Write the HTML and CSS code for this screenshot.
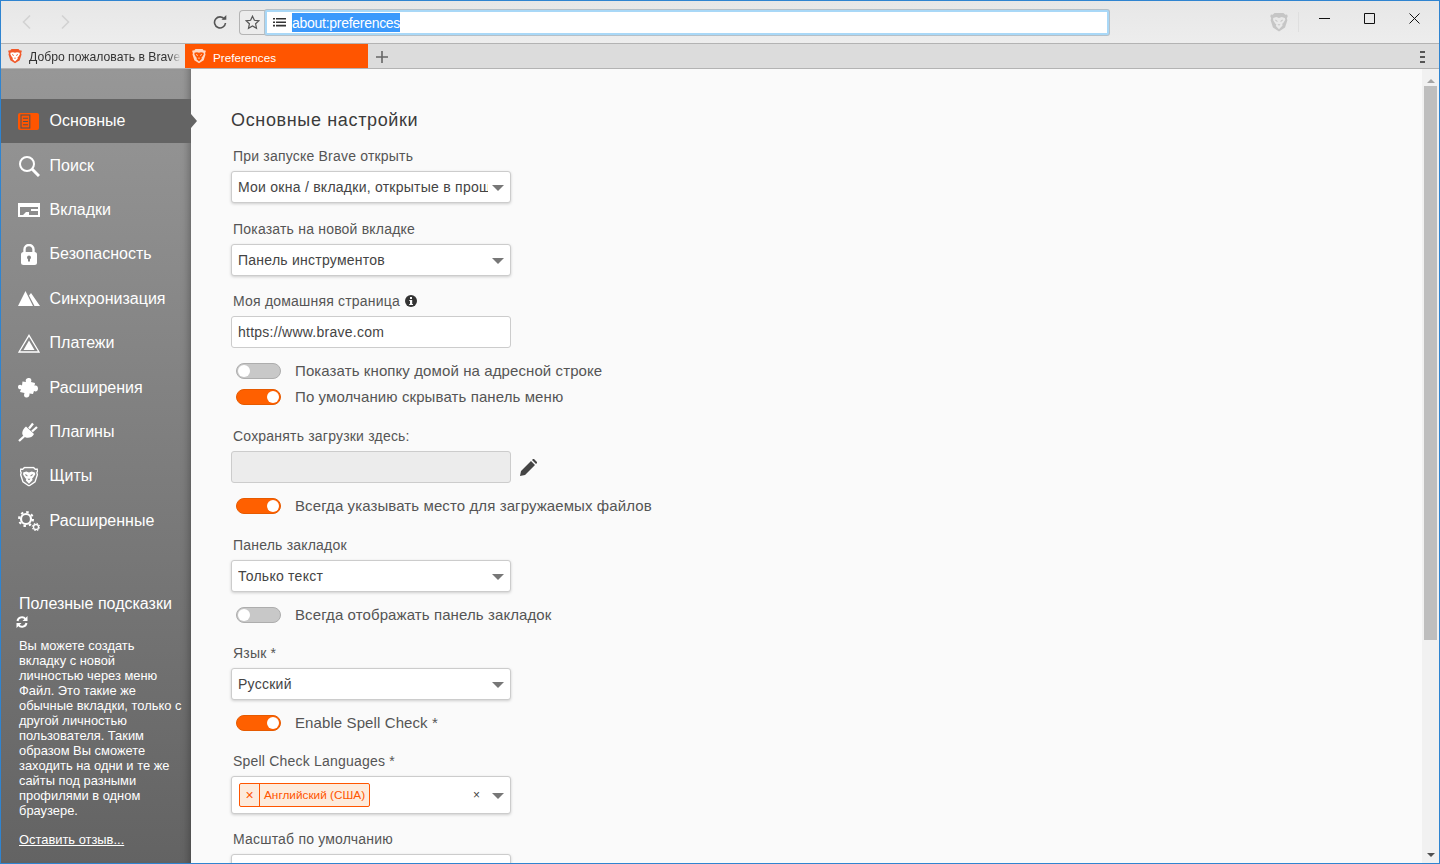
FILE: index.html
```html
<!DOCTYPE html>
<html lang="ru">
<head>
<meta charset="utf-8">
<title>Preferences</title>
<link rel="stylesheet" href="styles.css">
</head>
<body>
<svg class="defs" width="0" height="0" aria-hidden="true">
  <symbol id="shield" viewBox="0 0 20 22">
    <path d="M5 1h10l2 2 2-.3.7 1.800-1 2.300.6 2.200-2.600 8L10 21.500 3.300 17l-2.600-8 .6-2.200-1-2.300L1 2.700 3 3z"/>
  </symbol>
  <symbol id="lion" viewBox="0 0 20 22">
    <path fill-rule="evenodd" d="M3.500 6.500l3.500-1 3 1 3-1 3.500 1 .5 2-2.500 4-1 .5.5 2L10 19l-3.500-3.500.5-2-1-.5-2.500-4zM6.200 8.200l2.300 1.700-.5 1-2.300-1.700zM13.800 8.200l-2.300 1.700.5 1 2.300-1.700zM8.300 13.500h3.400L10 15.300z"/>
  </symbol>
</svg>
<div class="toolbar">
  <svg class="nav-arrow" width="12" height="16" viewBox="0 0 12 16"><path d="M9 1.500L2.500 8 9 14.500"/></svg>
  <svg class="nav-arrow forward" width="12" height="16" viewBox="0 0 12 16"><path d="M3 1.500L9.500 8 3 14.500"/></svg>
  <svg class="reload" width="14" height="14" viewBox="0 0 14 14"><path d="M11.500 4.200A5.500 5.500 0 1 0 12.500 8"/><path class="solid" d="M8.500 4.800h4.800V0z"/></svg>
  <div class="star-box">
    <svg width="15" height="15" viewBox="0 0 15 15"><path d="M7.500 1.200l1.900 4.100 4.500.5-3.300 3 .9 4.500-4-2.300-4 2.300.9-4.500-3.300-3 4.500-.5z"/></svg>
  </div>
  <div class="url-box">
    <svg class="url-icon" width="13" height="9" viewBox="0 0 13 9"><path d="M0 0h2v1.600H0zM3 0h10v1.600H3zM0 3.400h2V5H0zM3 3.400h10V5H3zM0 6.800h2v1.600H0zM3 6.800h10v1.600H3z"/></svg>
    <span class="url-text">about:preferences</span>
  </div>
  <svg class="lion-btn" width="18" height="20" viewBox="0 0 20 22"><use href="#shield"/><use class="lion-cut" href="#lion"/></svg>
  <div class="tool-sep"></div>
  <div class="win-btns">
    <svg width="11" height="11" viewBox="0 0 11 11"><path d="M0 5.500h11"/></svg>
    <svg width="11" height="11" viewBox="0 0 11 11"><path d="M.5.500h10v10H.5z"/></svg>
    <svg width="11" height="11" viewBox="0 0 11 11"><path d="M.5.500l10 10M10.500.500l-10 10"/></svg>
  </div>
</div>

<div class="tabbar">
  <div class="tab">
    <svg class="tab-icon" width="14" height="16" viewBox="0 0 20 22"><use class="shield-o" href="#shield"/><use class="lion-w" href="#lion"/></svg>
    <span class="tab-title fade">Добро пожаловать в Brave</span>
  </div>
  <div class="tab active">
    <svg class="tab-icon" width="14" height="16" viewBox="0 0 20 22"><use class="shield-w" href="#shield"/><use class="shield-lion" href="#lion"/></svg>
    <span class="tab-title">Preferences</span>
  </div>
  <svg class="plus" width="12" height="12" viewBox="0 0 12 12"><path d="M6 0v12M0 6h12"/></svg>
  <div class="tab-menu"><i></i><i></i><i></i></div>
</div>

<div class="main">
  <aside class="sidebar">
    <nav class="nav">
      <a class="nav-item current">
        <svg class="nav-icon" width="21" height="17" viewBox="0 0 21 17"><rect width="21" height="17" rx="2" fill="#ff5500"/><rect x="3" y="2" width="8.800" height="13" fill="none" stroke="#555" stroke-width="1.100"/><path d="M5 5.200h5M5 8.500h5M5 11.800h5" stroke="#555" stroke-width="1.100"/></svg>
        <span>Основные</span>
      </a>
      <a class="nav-item">
        <svg class="nav-icon" width="22" height="22" viewBox="0 0 22 22"><circle cx="9" cy="9" r="7" fill="none" stroke="#fff" stroke-width="2"/><path d="M14 14l7 7" stroke="#fff" stroke-width="3"/></svg>
        <span>Поиск</span>
      </a>
      <a class="nav-item">
        <svg class="nav-icon" width="22" height="14" viewBox="0 0 22 14"><path fill="#fff" d="M0 0h22v14H0z"/><path fill="#8c8c8c" d="M2 4h18v2H13v2h7v4H11V9H8l-3 3H2z"/></svg>
        <span>Вкладки</span>
      </a>
      <a class="nav-item">
        <svg class="nav-icon lock" width="16" height="21" viewBox="0 0 16 21"><path fill="none" stroke="#fff" stroke-width="2.400" d="M3.500 9V5.500a4.500 4.500 0 0 1 9 0V9"/><rect y="8" width="16" height="13" rx="2.500" fill="#fff"/><circle cx="8" cy="13.500" r="2" fill="#848484"/><path d="M7 14h2v3.500H7z" fill="#848484"/></svg>
        <span>Безопасность</span>
      </a>
      <a class="nav-item">
        <svg class="nav-icon" width="22" height="15" viewBox="0 0 22 15"><path fill="#fff" d="M7.500 0L15 15H0zM13 2l9 13h-5.500L11 4.500z"/></svg>
        <span>Синхронизация</span>
      </a>
      <a class="nav-item">
        <svg class="nav-icon" width="22" height="19" viewBox="0 0 22 19"><path fill="none" stroke="#fff" stroke-width="1.300" d="M11 1.300L21 18H1z"/><path fill="#fff" d="M11 6.500L16.500 16h-11z"/></svg>
        <span>Платежи</span>
      </a>
      <a class="nav-item">
        <svg class="nav-icon" width="20" height="20" viewBox="0 0 20 20"><path fill="#fff" d="M8 4C7 1 9 0 11 0c2 0 3 2 2 4l4 1-.5 3c1.500-1 3.500 0 3.500 2.500S18 14 16 13l-1 3-3.500-.5c.5 2.500-1.500 4.500-3.500 4S5.500 17.500 6.500 15L2 14l1-3c-2 1-3-.5-3-2 0-2 2-3 4-1.500l.5-4z"/></svg>
        <span>Расширения</span>
      </a>
      <a class="nav-item">
        <svg class="nav-icon" width="20" height="21" viewBox="0 0 20 21"><path fill="#fff" d="M8 5.500l8 7.500c-2 4-7 5-10 2.500S4 9 8 5.500z"/><path d="M11 7.500l4-5M14 10.500l5-4.500M6.500 15l-5.500 5" stroke="#fff" stroke-width="2.300" fill="none"/></svg>
        <span>Плагины</span>
      </a>
      <a class="nav-item">
        <svg class="nav-icon shield-nav" width="18" height="21" viewBox="0 0 20 22"><use class="shield-line" href="#shield"/><use class="lion-w" href="#lion"/></svg>
        <span>Щиты</span>
      </a>
      <a class="nav-item">
        <svg class="nav-icon" width="22" height="20" viewBox="0 0 22 20"><circle cx="8" cy="8" r="5" fill="none" stroke="#fff" stroke-width="2.200"/><circle cx="8" cy="8" r="7" fill="none" stroke="#fff" stroke-width="2" stroke-dasharray="2.500 3"/><circle cx="18" cy="16" r="2.500" fill="none" stroke="#fff" stroke-width="1.300"/><circle cx="18" cy="16" r="3.800" fill="none" stroke="#fff" stroke-width="1" stroke-dasharray="1.500 1.500"/></svg>
        <span>Расширенные</span>
      </a>
    </nav>
    <div class="tips">
      <h3 class="tips-title">Полезные подсказки</h3>
      <svg class="tips-refresh" width="12" height="12" viewBox="0 0 12 12"><path fill="none" stroke="#fff" stroke-width="2" d="M1.500 5A4.500 4.500 0 0 1 9.500 3M10.500 7A4.500 4.500 0 0 1 2.500 9"/><path fill="#fff" d="M11.500 0v5h-5zM.5 12V7h5z"/></svg>
      <p class="tips-text">Вы можете создать вкладку с новой личностью через меню Файл. Это такие же обычные вкладки, только с другой личностью пользователя. Таким образом Вы сможете заходить на одни и те же сайты под разными профилями в одном браузере.</p>
      <a class="tips-link">Оставить отзыв...</a>
    </div>
  </aside>

  <section class="content">
    <h2 class="page-title">Основные настройки</h2>

    <label class="field-label start">При запуске Brave открыть</label>
    <div class="select"><span class="value">Мои окна / вкладки, открытые в прошлый раз</span></div>

    <label class="field-label gap">Показать на новой вкладке</label>
    <div class="select"><span class="value">Панель инструментов</span></div>

    <label class="field-label gap-home">Моя домашняя страница
      <svg class="info" width="12" height="12" viewBox="0 0 12 12"><circle cx="6" cy="6" r="6" fill="#333"/><path fill="#fafafa" d="M5 2h2v2H5zM4.300 5h2.900v4h.8v1H4.200V9H5V6h-.7z"/></svg>
    </label>
    <div class="input"><span>https://www.brave.com</span></div>

    <div class="switch-row first"><span class="switch"></span><span class="switch-text">Показать кнопку домой на адресной строке</span></div>
    <div class="switch-row next"><span class="switch on"></span><span class="switch-text">По умолчанию скрывать панель меню</span></div>

    <label class="field-label gap-wide">Сохранять загрузки здесь:</label>
    <div class="path-row">
      <div class="input disabled"></div>
      <svg class="pencil" width="17" height="17" viewBox="0 0 17 17"><path fill="#444" d="M0 17l1-5L11 2l4 4L5 16zM12 1l1-1 1 0 3 3v1l-1 1z"/></svg>
    </div>
    <div class="switch-row first"><span class="switch on"></span><span class="switch-text">Всегда указывать место для загружаемых файлов</span></div>

    <label class="field-label gap-wide">Панель закладок</label>
    <div class="select"><span class="value">Только текст</span></div>
    <div class="switch-row first"><span class="switch"></span><span class="switch-text">Всегда отображать панель закладок</span></div>

    <label class="field-label gap-lang">Язык *</label>
    <div class="select"><span class="value">Русский</span></div>
    <div class="switch-row first"><span class="switch on"></span><span class="switch-text">Enable Spell Check *</span></div>

    <label class="field-label gap-lang">Spell Check Languages *</label>
    <div class="select multi">
      <span class="chip"><span class="chip-x">×</span><span class="chip-text">Английский (США)</span></span>
      <span class="clear">×</span>
    </div>

    <label class="field-label gap-zoom">Масштаб по умолчанию</label>
    <div class="select"></div>
  </section>

  <div class="scrollbar">
    <span class="scroll-up"></span>
    <span class="scroll-thumb"></span>
    <span class="scroll-down"></span>
  </div>
</div>
</body>
</html>
```
FILE: styles.css
```css
* { box-sizing: border-box; }
html, body { margin: 0; height: 100%; overflow: hidden; }
body {
  display: flex;
  flex-direction: column;
  height: 864px;
  border: 1px solid #2f84d0;
  font-family: "Liberation Sans", Arial, sans-serif;
  background: #fafafa;
}
.defs { position: absolute; }

/* toolbar */
.toolbar {
  height: 42px;
  flex: none;
  display: flex;
  align-items: center;
  background: linear-gradient(#e7e7e7, #ededed);
}
.nav-arrow { margin-left: 20px; flex: none; }
.nav-arrow path { fill: none; stroke: #d2d2d2; stroke-width: 1.600; }
.nav-arrow.forward { margin-left: 26px; }
.reload { margin-left: 142px; flex: none; }
.reload path { fill: none; stroke: #555; stroke-width: 1.600; }
.reload path.solid { fill: #555; stroke: none; }
.star-box {
  margin-left: 12px;
  width: 26px;
  height: 25px;
  flex: none;
  display: flex;
  align-items: center;
  justify-content: center;
  border: 1px solid #b4b4b4;
  border-right: 0;
  border-radius: 4px 0 0 4px;
  background: #ececec;
}
.star-box path { fill: none; stroke: #555; stroke-width: 1.200; }
.url-box {
  width: 844px;
  height: 25px;
  flex: none;
  display: flex;
  align-items: center;
  padding-left: 6px;
  background: #fff;
  border: 2px solid #a9d8f7;
  box-shadow: 0 0 0 1px #b5c0c8;
  border-radius: 2px;
  font-size: 14px;
}
.url-icon { fill: #333; flex: none; }
.url-text {
  margin-left: 6px;
  height: 19px;
  line-height: 21px;
  color: #fff;
  background: #3b99fc;
  letter-spacing: -0.28px;
}
.lion-btn { margin-left: 161px; flex: none; fill: #c6c6c6; }
.lion-cut { fill: #e9e9e9; }
.tool-sep { width: 1px; height: 20px; margin-left: 10px; background: #dfdfdf; flex: none; }
.win-btns {
  display: flex;
  align-items: center;
  gap: 34px;
  margin-left: 20px;
  margin-bottom: 8px;
}
.win-btns svg { fill: none; stroke: #111; stroke-width: 1; flex: none; }

/* tabs */
.tabbar {
  height: 26px;
  flex: none;
  display: flex;
  align-items: stretch;
  background: #dcdcdc;
  border-top: 1px solid #b3b3b3;
  border-bottom: 1px solid #b3b3b3;
}
.tab {
  width: 184px;
  flex: none;
  display: flex;
  align-items: center;
  gap: 7px;
  padding-left: 7px;
  padding-top: 2px;
  background: #e4e4e4;
  overflow: hidden;
  font-size: 12.200px;
  color: #333;
  white-space: nowrap;
}
.tab.active {
  width: 183px;
  background: #ff5500;
  color: #fff;
  font-size: 11.700px;
}
.tab-title { flex: 1; overflow: hidden; }
.tab-title.fade {
  margin-right: 4px;
  -webkit-mask-image: linear-gradient(to left, transparent, #000 12px);
  mask-image: linear-gradient(to left, transparent, #000 12px);
}
.tab-icon { flex: none; margin-top: -3px; }
.shield-o { fill: #f1592a; }
.lion-w { fill: #fff; }
.shield-w { fill: #ffd8c4; }
.shield-lion { fill: #ff5500; }
.plus { margin: 1px 0 0 8px; align-self: center; flex: none; }
.plus path { fill: none; stroke: #666; stroke-width: 1.600; }
.tab-menu {
  margin-left: auto;
  margin-right: 14px;
  padding-top: 1px;
  width: 5px;
  display: flex;
  flex-direction: column;
  justify-content: center;
  gap: 3px;
}
.tab-menu i { display: block; height: 2px; background: #555; }

/* layout */
.main {
  flex: 1;
  min-height: 0;
  display: flex;
}
.sidebar {
  width: 190px;
  flex: none;
  display: flex;
  flex-direction: column;
  padding-top: 30px;
  background: linear-gradient(#979797, #636363);
  box-shadow: inset -9px 0 8px -8px rgba(0,0,0,.35);
  color: #fff;
}
.nav { display: flex; flex-direction: column; }
.nav-item {
  height: 44.400px;
  display: grid;
  grid-template-columns: 31.600px 1fr;
  align-items: center;
  padding-left: 17px;
  font-size: 16px;
  position: relative;
}
.nav-icon { justify-self: start; }
.nav-icon.lock { margin-left: 3px; }
.nav-icon.shield-nav { margin-left: 2px; }
.shield-line { fill: #878787; stroke: #fff; stroke-width: 1.500; }
.nav-item.current { background: #646464; }
.nav-item.current::after {
  content: "";
  position: absolute;
  left: 100%;
  top: 50%;
  margin-top: -7px;
  border: 7px solid transparent;
  border-left: 6px solid #646464;
}
.tips { padding: 50px 9px 0 18px; }
.tips-title { margin: 0; font-size: 16px; line-height: 21px; font-weight: 400; }
.tips-refresh { display: block; margin: 2px 0 0 -3px; }
.tips-text { margin: 10px 0 0; font-size: 12.900px; line-height: 15px; }
.tips-link {
  display: block;
  margin-top: 14px;
  font-size: 12.900px;
  line-height: 15px;
  text-decoration: underline;
}

/* content */
.content {
  flex: 1;
  min-width: 0;
  overflow: hidden;
  padding: 40px 0 0 40px;
  background: #fafafa;
  color: #444;
  font-size: 14px;
}
.page-title {
  margin: 0;
  height: 22px;
  font-size: 18px;
  line-height: 22px;
  font-weight: 400;
  color: #3b3b3b;
  letter-spacing: .65px;
}
.field-label {
  display: flex;
  align-items: center;
  gap: 5px;
  height: 18px;
  margin: 14px 0 6px 2px;
  color: #555;
  letter-spacing: .2px;
}
.field-label.start { margin-top: 16px; }
.field-label.gap { margin-top: 17px; }
.field-label.gap-home { margin-top: 16px; }
.field-label.gap-wide { margin-top: 21px; }
.field-label.gap-lang { margin-top: 20px; }
.field-label.gap-zoom { margin-top: 16px; }
.select, .input {
  width: 280px;
  height: 32px;
  display: flex;
  align-items: center;
  padding: 0 22px 0 6px;
  background: #fff;
  border: 1px solid #ccc;
  border-radius: 3px;
  color: #444;
  letter-spacing: .25px;
  white-space: nowrap;
  flex: none;
}
.select {
  position: relative;
  box-shadow: 0 1px 3px rgba(0,0,0,.18);
}
.select::after {
  content: "";
  position: absolute;
  right: 6px;
  top: 13px;
  border: 6px solid transparent;
  border-top: 6px solid #777;
  border-bottom: 0;
}
.value { display: block; overflow: hidden; flex: 1; }
.input { padding-right: 6px; }
.input.disabled { background: #ececec; }
.path-row { display: flex; align-items: center; gap: 9px; }
.pencil { flex: none; margin-top: 1px; }
.switch-row {
  display: flex;
  align-items: center;
  height: 18px;
  padding-left: 5px;
  gap: 14px;
  color: #555;
  font-size: 15px;
  letter-spacing: .1px;
  white-space: nowrap;
}
.switch-text { padding-bottom: 2px; }
.switch-row.first { margin-top: 14px; }
.switch-row.next { margin-top: 8px; }
.switch {
  position: relative;
  width: 45px;
  height: 16px;
  flex: none;
  border-radius: 8px;
  background: #c8c8c8;
  border: 1px solid #adadad;
}
.switch::after {
  content: "";
  position: absolute;
  left: 1px;
  top: 1px;
  width: 12px;
  height: 12px;
  border-radius: 50%;
  background: #fff;
}
.switch.on { background: #ff6000; border-color: #e65a00; }
.switch.on::after { left: auto; right: 1px; }
.select.multi { height: 38px; padding-left: 7px; letter-spacing: 0; }
.select.multi::after { top: 16px; }
.chip {
  display: flex;
  align-items: stretch;
  height: 24px;
  border: 1px solid #ff5500;
  border-radius: 2px;
  background: #fdebdc;
  color: #ff5500;
  font-size: 11.800px;
  line-height: 22px;
}
.chip-x { width: 20px; font-size: 14px; text-align: center; border-right: 1px solid #ff5500; }
.chip-text { padding: 0 4px; }
.clear { margin-left: auto; margin-right: 8px; font-size: 12px; color: #444; }

/* scrollbar */
.scrollbar {
  width: 17px;
  flex: none;
  position: relative;
  display: flex;
  flex-direction: column;
  align-items: center;
  background: #f1f1f1;
}
.scroll-up {
  margin-top: 10px;
  border: 4px solid transparent;
  border-bottom: 4px solid #a3a3a3;
  border-top: 0;
}
.scroll-thumb {
  margin-top: 3px;
  width: 13px;
  height: 554px;
  background: #bebebe;
}
.scroll-down {
  margin-top: auto;
  margin-bottom: 6px;
  border: 4px solid transparent;
  border-top: 4px solid #505050;
  border-bottom: 0;
}
```
